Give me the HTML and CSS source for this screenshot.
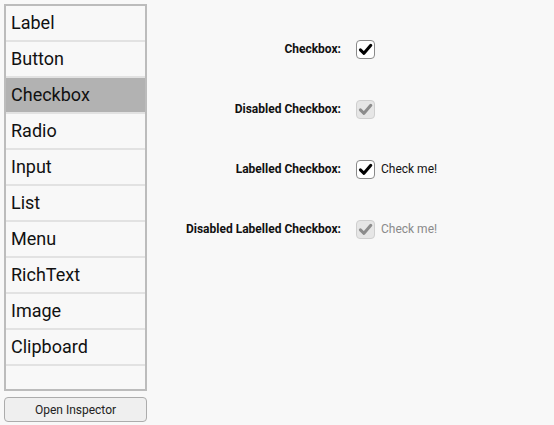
FILE: index.html
```html
<!DOCTYPE html>
<html>
<head>
<meta charset="utf-8">
<link rel="stylesheet" href="styles.css">
</head>
<body>
<div class="app">
  <aside class="sidebar">
    <div class="list">
      <div class="item">Label</div>
      <div class="item">Button</div>
      <div class="item selected">Checkbox</div>
      <div class="item">Radio</div>
      <div class="item">Input</div>
      <div class="item">List</div>
      <div class="item">Menu</div>
      <div class="item">RichText</div>
      <div class="item">Image</div>
      <div class="item">Clipboard</div>
    </div>
    <button class="inspector">Open Inspector</button>
  </aside>
  <main class="main">
    <div class="grid">
      <div class="lbl">Checkbox:</div>
      <div class="ctl">
        <span class="box"><svg viewBox="0 0 19 19" width="19" height="19"><path d="M4.4 9.8 L8 13.3 L14.8 5.3" class="tick"/></svg></span>
      </div>
      <div class="lbl">Disabled Checkbox:</div>
      <div class="ctl">
        <span class="box disabled"><svg viewBox="0 0 19 19" width="19" height="19"><path d="M4.4 9.8 L8 13.3 L14.8 5.3" class="tick"/></svg></span>
      </div>
      <div class="lbl">Labelled Checkbox:</div>
      <div class="ctl">
        <span class="box"><svg viewBox="0 0 19 19" width="19" height="19"><path d="M4.4 9.8 L8 13.3 L14.8 5.3" class="tick"/></svg></span>
        <span class="text">Check me!</span>
      </div>
      <div class="lbl">Disabled Labelled Checkbox:</div>
      <div class="ctl">
        <span class="box disabled"><svg viewBox="0 0 19 19" width="19" height="19"><path d="M4.4 9.8 L8 13.3 L14.8 5.3" class="tick"/></svg></span>
        <span class="text muted">Check me!</span>
      </div>
    </div>
  </main>
</div>
</body>
</html>
```
FILE: styles.css
```css
html, body {
  margin: 0;
  padding: 0;
  background: #f8f8f8;
  font-family: Roboto, "Noto Sans", sans-serif;
  color: #111;
}
.app {
  display: flex;
  height: 425px;
}
.sidebar {
  width: 143px;
  padding: 4px 0 3px 4px;
  display: flex;
  flex-direction: column;
  gap: 6px;
}
.list {
  flex: 1;
  border: 2px solid #bcbcbc;
  background: #f8f8f8;
  display: flex;
  flex-direction: column;
}
.item {
  height: 34px;
  border-bottom: 2px solid #e2e2e2;
  padding-left: 5px;
  font-size: 18px;
  line-height: 33px;
  color: #111;
}
.item.selected {
  background: #b2b2b2;
}
.inspector {
  height: 25px;
  border: 1px solid #acacac;
  border-radius: 4px;
  background: #efefef;
  font-family: inherit;
  font-size: 12px;
  color: #222;
  padding: 0;
}
.main {
  flex: 1;
  padding-top: 39px;
}
.grid {
  display: grid;
  grid-template-columns: 194px auto;
  column-gap: 15px;
  row-gap: 40px;
  align-items: center;
}
.lbl {
  text-align: right;
  font-weight: bold;
  font-size: 12px;
  height: 20px;
  line-height: 20px;
}
.ctl {
  display: flex;
  align-items: center;
  gap: 6px;
  height: 20px;
}
.box {
  width: 17px;
  height: 17px;
  border: 1px solid #8a8a8a;
  border-radius: 4px;
  background: #fff;
  display: flex;
  align-items: center;
  justify-content: center;
}
.box svg {
  display: block;
  flex: none;
}
.tick {
  fill: none;
  stroke: #000;
  stroke-width: 3;
  stroke-linecap: round;
  stroke-linejoin: round;
}
.box.disabled {
  background: #e6e6e6;
  border-color: #cfcfcf;
}
.box.disabled .tick {
  stroke: #8c8c8c;
}
.text {
  font-size: 12px;
  color: #111;
}
.text.muted {
  color: #8a8a8a;
}
```
